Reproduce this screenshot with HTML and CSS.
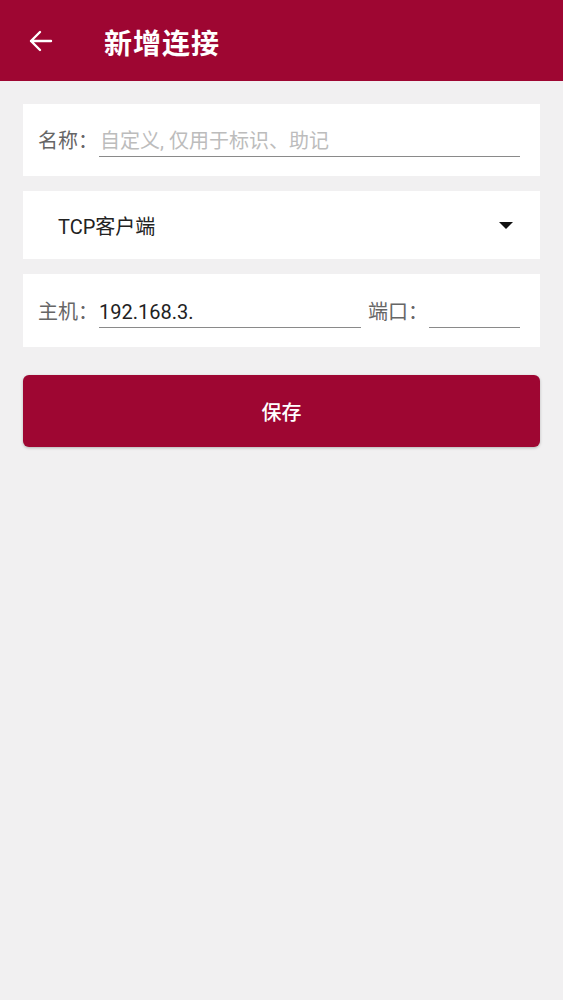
FILE: index.html
```html
<!DOCTYPE html>
<html lang="zh">
<head>
<meta charset="utf-8">
<title>新增连接</title>
<link rel="stylesheet" href="styles.css">
</head>
<body>
<header class="appbar">
  <svg class="back" width="26" height="24" viewBox="0 0 26 24">
    <path d="M24 12H4M13 3L4 12L13 21" fill="none" stroke="#fff" stroke-width="2.4" stroke-linecap="round" stroke-linejoin="round"/>
  </svg>
  <h1 class="title">新增连接</h1>
</header>
<main class="content">
  <section class="card row">
    <span class="label">名称：</span>
    <div class="field grow"><span class="placeholder">自定义, 仅用于标识、助记</span></div>
  </section>
  <section class="card select">
    <span class="select-text">TCP客户端</span>
    <span class="caret"></span>
  </section>
  <section class="card row host-row">
    <span class="label">主机：</span>
    <div class="field host"><span class="value">192.168.3.</span></div>
    <span class="label port-label">端口：</span>
    <div class="field port"></div>
  </section>
  <button class="save">保存</button>
</main>
</body>
</html>
```

FILE: styles.css
```css
* { box-sizing: border-box; }
html, body { margin: 0; padding: 0; }
body {
  background: #f1f0f1;
  font-family: Roboto, "Noto Sans CJK SC", sans-serif;
  min-height: 1000px;
}
.appbar {
  height: 81px;
  background: #9e0632;
  display: flex;
  align-items: center;
  padding-left: 27px;
}
.back { display: block; margin-top: 1px; }
.title {
  margin: 0 0 0 51px;
  color: #fff;
  font-family: "Noto Sans CJK SC", sans-serif;
  font-size: 28px;
  font-weight: 700;
  letter-spacing: 1px;
  line-height: 1;
  padding-top: 2px;
}
.content {
  padding: 23px 23px;
  display: flex;
  flex-direction: column;
}
.card {
  background: #fff;
}
.row {
  display: flex;
  align-items: flex-end;
  height: 72px;
  padding: 0 20px 19px 15px;
  margin-bottom: 15px;
}
.label {
  flex: 0 0 61px;
  width: 61px;
  font-size: 20px;
  color: #666;
  line-height: 28px;
  padding-bottom: 2px;
  white-space: nowrap;
}
.field {
  height: 32px;
  padding-top: 2px;
  border-bottom: 1.5px solid #8a8a8a;
  display: flex;
  align-items: flex-start;
  font-size: 20px;
  line-height: 28px;
}
.grow { flex: 1; padding-left: 1px; }
.placeholder { color: #bcbcbc; }
.value { color: #222; }
.host { flex: 0 0 262px; }
.port-label { margin-left: 7px; }
.port { flex: 0 0 91px; }
.select {
  height: 68px;
  margin-bottom: 15px;
  display: flex;
  align-items: center;
  justify-content: space-between;
  padding: 0 27px 0 35px;
}
.select-text {
  font-size: 20px;
  color: #222;
}
.caret {
  width: 0; height: 0;
  border-left: 7.5px solid transparent;
  border-right: 7.5px solid transparent;
  border-top: 7px solid #111;
  margin-top: 0;
}
.host-row { margin-bottom: 28px; height: 73px; }
.save {
  height: 72px;
  border: none;
  border-radius: 6px;
  background: #9e0632;
  color: #fff;
  font-family: "Noto Sans CJK SC", sans-serif;
  font-size: 20px;
  font-weight: 500;
  box-shadow: 0 1px 3px rgba(0,0,0,0.25);
  padding: 0;
}
```
